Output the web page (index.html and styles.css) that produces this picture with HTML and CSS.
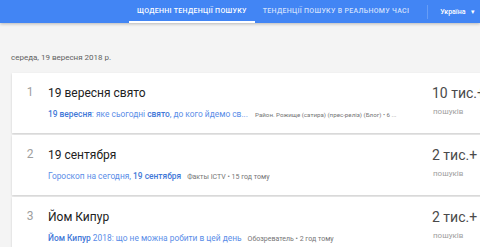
FILE: index.html
```html
<!DOCTYPE html>
<html lang="uk">
<head>
    <meta charset="UTF-8">
    <title>Google Trends</title>
    <link rel="stylesheet" href="styles.css">
</head>
<body>
    <header class="top-bar">
        <nav class="tabs">
            <a class="tab active">Щоденні тенденції пошуку</a>
            <a class="tab">Тенденції пошуку в реальному часі</a>
        </nav>
        <div class="country">Україна <span class="caret">&#9662;</span></div>
    </header>

    <main class="feed">
        <div class="feed-date">середа, 19 вересня 2018 р.</div>

        <div class="feed-list">
            <div class="feed-item">
                <div class="rank">1</div>
                <div class="details">
                    <div class="title">19 вересня свято</div>
                    <div class="summary">
                        <span class="link"><b>19 вересня</b>: яке сьогодні <b>свято</b>, до кого йдемо св...</span>
                        <span class="source compact">Район. Рожище (сатира) (прес-реліз) (Блог) • 6 ...</span>
                    </div>
                </div>
                <div class="count">
                    <div class="count-value">10 тис.+</div>
                    <div class="count-label">пошуків</div>
                </div>
            </div>

            <div class="feed-item">
                <div class="rank">2</div>
                <div class="details">
                    <div class="title">19 сентября</div>
                    <div class="summary">
                        <span class="link">Гороскоп на сегодня, <b>19 сентября</b></span>
                        <span class="source">Факты ICTV • 15 год тому</span>
                    </div>
                </div>
                <div class="count">
                    <div class="count-value">2 тис.+</div>
                    <div class="count-label">пошуків</div>
                </div>
            </div>

            <div class="feed-item">
                <div class="rank">3</div>
                <div class="details">
                    <div class="title">Йом Кипур</div>
                    <div class="summary">
                        <span class="link"><b>Йом Кипур</b> 2018: що не можна робити в цей день</span>
                        <span class="source">Обозреватель • 2 год тому</span>
                    </div>
                </div>
                <div class="count">
                    <div class="count-value">2 тис.+</div>
                    <div class="count-label">пошуків</div>
                </div>
            </div>
        </div>
    </main>
</body>
</html>
```
FILE: styles.css
```css
body {
    margin: 0;
    background-color: #f4f4f4;
    font-family: Roboto, "Liberation Sans", sans-serif;
    overflow: hidden;
}

/* верхня панель */
.top-bar {
    height: 23px;
    background-color: #4285f4;
    box-shadow: 0 1px 3px rgba(0, 0, 0, 0.25);
    display: flex;
    align-items: stretch;
}

.tabs {
    display: flex;
    margin-left: 129px;
}

.tab {
    display: flex;
    align-items: center;
    padding: 0 8px;
    font-size: 7px;
    font-weight: 500;
    letter-spacing: 0.3px;
    text-transform: uppercase;
    white-space: nowrap;
    color: rgba(255, 255, 255, 0.75);
    border-bottom: 2px solid transparent;
}

.tab.active {
    color: #ffffff;
    border-bottom-color: #ffffff;
}

.country {
    display: flex;
    align-items: center;
    margin-left: 10px;
    padding-left: 12px;
    border-left: 1px solid rgba(255, 255, 255, 0.2);
    height: 14px;
    align-self: center;
    font-size: 7px;
    font-weight: 500;
    white-space: nowrap;
    color: #ffffff;
}

.caret {
    margin-left: 6px;
    font-size: 7px;
}

/* стрічка */
.feed {
    padding: 30px 0 0 12px;
}

.feed-date {
    font-size: 8px;
    color: #616161;
    margin-left: -1px;
    margin-bottom: 11px;
}

.feed-list {
    display: flex;
    flex-direction: column;
    gap: 2px;
    width: 520px;
}

.feed-item {
    display: grid;
    grid-template-columns: 36px 384px 1fr;
    height: 60px;
    background-color: #ffffff;
    box-shadow: 0 1px 2px rgba(0, 0, 0, 0.16);
}

.rank {
    text-align: center;
    padding-top: 12px;
    font-size: 12px;
    color: #9e9e9e;
}

.details {
    padding-top: 12px;
}

.title {
    font-size: 12px;
    color: #212121;
    line-height: 16px;
}

.summary {
    margin-top: 8px;
    font-size: 7px;
    white-space: nowrap;
    display: flex;
    align-items: baseline;
}

.link {
    color: #5a8de8;
    font-size: 8.4px;
}

.link b {
    font-weight: 500;
    color: #3f78d8;
}

.source {
    margin-left: 6px;
    color: #757575;
}

.source.compact {
    margin-left: 7px;
    font-size: 6.2px;
}

.count {
    padding-top: 11px;
}

.count-value {
    font-size: 14px;
    color: #4a4a4a;
    line-height: 18px;
}

.count-label {
    margin-top: 5px;
    margin-left: 1px;
    font-size: 8px;
    color: #9e9e9e;
}
```
